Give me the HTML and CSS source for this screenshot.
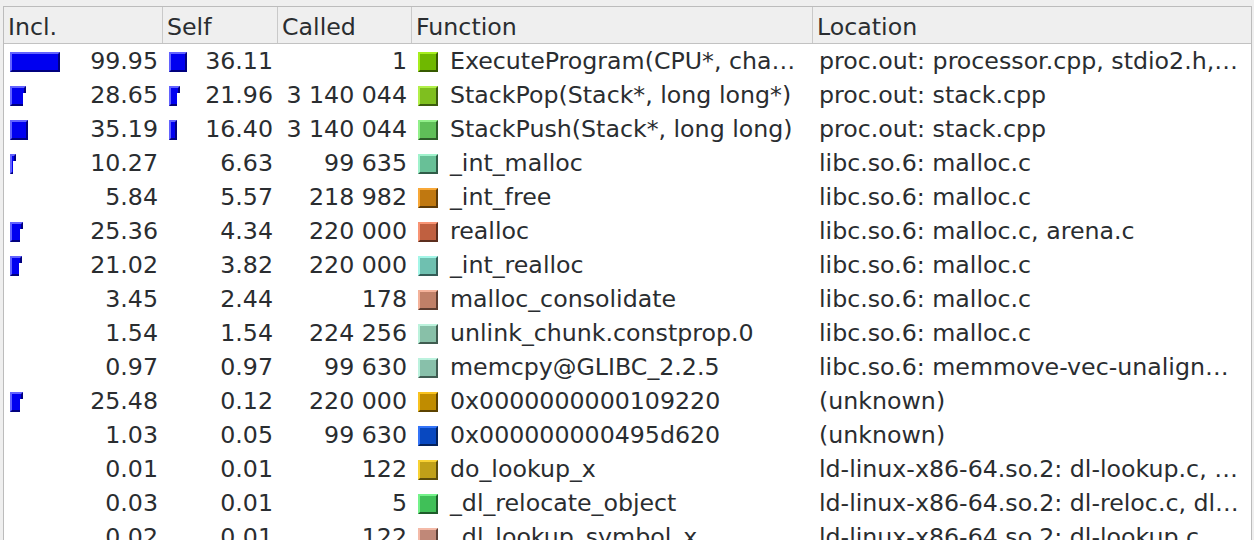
FILE: index.html
```html
<!DOCTYPE html>
<html>
<head>
<meta charset="utf-8">
<link rel="stylesheet" href="styles.css">
</head>
<body>
<div class="view">
  <div class="row head">
    <div class="hc">Incl.</div>
    <div class="hc">Self</div>
    <div class="hc">Called</div>
    <div class="hc">Function</div>
    <div class="hc">Location</div>
  </div>

  <div class="row">
    <div class="c num"><span class="bar" style="width:50px"></span><span class="v">99.95</span></div>
    <div class="c num"><span class="bar" style="width:18px"></span><span class="v">36.11</span></div>
    <div class="c num"><span class="v">1</span></div>
    <div class="c fn"><span class="sq" style="--f:#6fb800;--l:#a6ee1e;--d:#365a00"></span>ExecuteProgram(CPU*, cha…</div>
    <div class="c loc">proc.out: processor.cpp, stdio2.h,…</div>
  </div>
  <div class="row">
    <div class="c num"><span class="bar notch" style="width:16px"></span><span class="v">28.65</span></div>
    <div class="c num"><span class="bar notch" style="width:11px"></span><span class="v">21.96</span></div>
    <div class="c num"><span class="v">3 140 044</span></div>
    <div class="c fn"><span class="sq" style="--f:#7fbf1f;--l:#b2f04a;--d:#3c5c0e"></span>StackPop(Stack*, long long*)</div>
    <div class="c loc">proc.out: stack.cpp</div>
  </div>
  <div class="row">
    <div class="c num"><span class="bar" style="width:18px"></span><span class="v">35.19</span></div>
    <div class="c num"><span class="bar" style="width:8px"></span><span class="v">16.40</span></div>
    <div class="c num"><span class="v">3 140 044</span></div>
    <div class="c fn"><span class="sq" style="--f:#5fbf58;--l:#92f08a;--d:#2c5c28"></span>StackPush(Stack*, long long)</div>
    <div class="c loc">proc.out: stack.cpp</div>
  </div>
  <div class="row">
    <div class="c num"><span class="bar notch" style="width:6px"></span><span class="v">10.27</span></div>
    <div class="c num"><span class="v">6.63</span></div>
    <div class="c num"><span class="v">99 635</span></div>
    <div class="c fn"><span class="sq" style="--f:#68c097;--l:#a0f2cc;--d:#305c48"></span>_int_malloc</div>
    <div class="c loc">libc.so.6: malloc.c</div>
  </div>
  <div class="row">
    <div class="c num"><span class="v">5.84</span></div>
    <div class="c num"><span class="v">5.57</span></div>
    <div class="c num"><span class="v">218 982</span></div>
    <div class="c fn"><span class="sq" style="--f:#c07810;--l:#f8a838;--d:#5c3a08"></span>_int_free</div>
    <div class="c loc">libc.so.6: malloc.c</div>
  </div>
  <div class="row">
    <div class="c num"><span class="bar notch" style="width:13px"></span><span class="v">25.36</span></div>
    <div class="c num"><span class="v">4.34</span></div>
    <div class="c num"><span class="v">220 000</span></div>
    <div class="c fn"><span class="sq" style="--f:#c06040;--l:#f89474;--d:#5c2e1e"></span>realloc</div>
    <div class="c loc">libc.so.6: malloc.c, arena.c</div>
  </div>
  <div class="row">
    <div class="c num"><span class="bar notch" style="width:12px"></span><span class="v">21.02</span></div>
    <div class="c num"><span class="v">3.82</span></div>
    <div class="c num"><span class="v">220 000</span></div>
    <div class="c fn"><span class="sq" style="--f:#6fc0b0;--l:#a4f6e8;--d:#345c56"></span>_int_realloc</div>
    <div class="c loc">libc.so.6: malloc.c</div>
  </div>
  <div class="row">
    <div class="c num"><span class="v">3.45</span></div>
    <div class="c num"><span class="v">2.44</span></div>
    <div class="c num"><span class="v">178</span></div>
    <div class="c fn"><span class="sq" style="--f:#c08068;--l:#f4b29a;--d:#5c3c30"></span>malloc_consolidate</div>
    <div class="c loc">libc.so.6: malloc.c</div>
  </div>
  <div class="row">
    <div class="c num"><span class="v">1.54</span></div>
    <div class="c num"><span class="v">1.54</span></div>
    <div class="c num"><span class="v">224 256</span></div>
    <div class="c fn"><span class="sq" style="--f:#88c0a8;--l:#bcf2dc;--d:#405c50"></span>unlink_chunk.constprop.0</div>
    <div class="c loc">libc.so.6: malloc.c</div>
  </div>
  <div class="row">
    <div class="c num"><span class="v">0.97</span></div>
    <div class="c num"><span class="v">0.97</span></div>
    <div class="c num"><span class="v">99 630</span></div>
    <div class="c fn"><span class="sq" style="--f:#88c0aa;--l:#bcf2de;--d:#405c52"></span>memcpy@GLIBC_2.2.5</div>
    <div class="c loc">libc.so.6: memmove-vec-unalign…</div>
  </div>
  <div class="row">
    <div class="c num"><span class="bar notch" style="width:13px"></span><span class="v">25.48</span></div>
    <div class="c num"><span class="v">0.12</span></div>
    <div class="c num"><span class="v">220 000</span></div>
    <div class="c fn"><span class="sq" style="--f:#c08c00;--l:#f8c220;--d:#5c4200"></span>0x0000000000109220</div>
    <div class="c loc">(unknown)</div>
  </div>
  <div class="row">
    <div class="c num"><span class="v">1.03</span></div>
    <div class="c num"><span class="v">0.05</span></div>
    <div class="c num"><span class="v">99 630</span></div>
    <div class="c fn"><span class="sq" style="--f:#0848c0;--l:#3474f8;--d:#04225c"></span>0x000000000495d620</div>
    <div class="c loc">(unknown)</div>
  </div>
  <div class="row">
    <div class="c num"><span class="v">0.01</span></div>
    <div class="c num"><span class="v">0.01</span></div>
    <div class="c num"><span class="v">122</span></div>
    <div class="c fn"><span class="sq" style="--f:#c0a018;--l:#f8d234;--d:#5c4c0a"></span>do_lookup_x</div>
    <div class="c loc">ld-linux-x86-64.so.2: dl-lookup.c, …</div>
  </div>
  <div class="row">
    <div class="c num"><span class="v">0.03</span></div>
    <div class="c num"><span class="v">0.01</span></div>
    <div class="c num"><span class="v">5</span></div>
    <div class="c fn"><span class="sq" style="--f:#40c058;--l:#74f28a;--d:#1e5c2a"></span>_dl_relocate_object</div>
    <div class="c loc">ld-linux-x86-64.so.2: dl-reloc.c, dl…</div>
  </div>
  <div class="row">
    <div class="c num"><span class="v">0.02</span></div>
    <div class="c num"><span class="v">0.01</span></div>
    <div class="c num"><span class="v">122</span></div>
    <div class="c fn"><span class="sq" style="--f:#c08878;--l:#f4baa8;--d:#5c4038"></span>_dl_lookup_symbol_x</div>
    <div class="c loc">ld-linux-x86-64.so.2: dl-lookup.c</div>
  </div>
</div>
</body>
</html>
```

FILE: styles.css
```css
html, body {
  margin: 0;
  padding: 0;
  height: 100%;
  overflow: hidden;
}
body {
  background: #efefef;
  font-family: "DejaVu Sans", sans-serif;
  font-size: 23.7px;
  color: #2a2d30;
}
.view {
  margin: 6px 0 0 3px;
  width: 1247px;
  height: 600px;
  border: 1px solid #bcbcbc;
  border-bottom: none;
  background: #ffffff;
}
.row {
  display: grid;
  grid-template-columns: 159px 115px 134px 401px 1fr;
  height: 34px;
  align-items: center;
  white-space: nowrap;
}
.head {
  height: 36px;
  background: #efefef;
  border-bottom: 1px solid #c2c2c2;
  align-items: stretch;
}
.hc {
  display: flex;
  align-items: center;
  padding-left: 4px;
  padding-top: 4px;
  border-right: 1px solid #c9c9c9;
}
.hc:last-child {
  border-right: none;
}
.c {
  display: flex;
  align-items: center;
  height: 34px;
  overflow: hidden;
}
.num {
  padding: 0 5px 0 6px;
}
.num .v {
  margin-left: auto;
}
.row .c:nth-child(1) {
  padding-right: 5px;
}
.bar {
  display: block;
  box-sizing: border-box;
  height: 20px;
  margin-top: 2px;
  background: #0000f0;
  border-top: 2px solid #6262ff;
  border-left: 2px solid #6262ff;
  border-bottom: 2px solid #00007e;
  border-right: 2px solid #00007e;
}
.bar.notch {
  clip-path: polygon(0 0, 100% 0, 100% 35%, calc(100% - 3px) 35%, calc(100% - 3px) 100%, 0 100%);
}
.fn {
  padding-left: 6px;
}
.sq {
  display: block;
  box-sizing: border-box;
  width: 20px;
  height: 20px;
  margin-top: 2px;
  margin-right: 12px;
  background: var(--f);
  border-top: 2px solid var(--l);
  border-left: 2px solid var(--l);
  border-bottom: 2px solid var(--d);
  border-right: 2px solid var(--d);
}
.loc {
  padding-left: 6px;
}
```
